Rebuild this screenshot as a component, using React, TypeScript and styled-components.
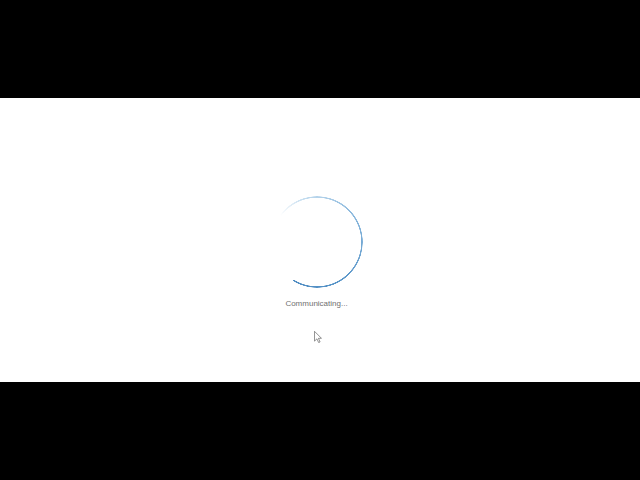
import styled, { createGlobalStyle } from "styled-components";

const GlobalStyle = createGlobalStyle`
  html, body {
    margin: 0;
    padding: 0;
    background: #000000;
  }
`;

export default function App() {
  return (
    <>
      <GlobalStyle />
      <Screen>
        <Band>
          <Spinner />
          <Status>Communicating...</Status>
          <Pointer width="8" height="12" viewBox="0 0 12 19">
            <path
              d="M0.5 0.5 L0.5 16 L4.3 12.4 L7 18.3 L9.3 17.3 L6.7 11.6 L11.5 11.6 Z"
              fill="#ffffff"
              stroke="#555555"
              strokeWidth="1"
              strokeLinejoin="round"
            />
          </Pointer>
        </Band>
      </Screen>
    </>
  );
}

const Screen = styled.div`
  width: 640px;
  height: 480px;
  background: #000000;
  display: flex;
  flex-direction: column;
  justify-content: center;
`;

const Band = styled.div`
  position: relative;
  height: 284px;
  background: #ffffff;
  display: flex;
  flex-direction: column;
  align-items: center;
  padding: 98px 7px 0 0;
  box-sizing: border-box;
  font-family: "Liberation Sans", Arial, sans-serif;
`;

// thin ring cut out of the conic gradient
const ring = `radial-gradient(
    circle closest-side,
    transparent calc(100% - 2px),
    #000 calc(100% - 1.5px),
    #000 calc(100% - 0.4px),
    transparent 100%
  )`;

const Spinner = styled.div`
  flex: none;
  width: 92px;
  height: 92px;
  margin-left: 1px;
  border-radius: 50%;
  background: conic-gradient(
    from 306deg,
    rgba(90, 150, 200, 0) 0deg,
    rgba(140, 188, 224, 0.55) 40deg,
    rgba(116, 170, 214, 0.85) 110deg,
    #5895c8 200deg,
    #4f8cc2 266deg,
    transparent 266deg
  );
  -webkit-mask: ${ring};
  mask: ${ring};
`;

const Status = styled.div`
  margin-top: 10px;
  font-size: 8px;
  line-height: 12px;
  color: #707070;
`;

const Pointer = styled.svg`
  position: absolute;
  left: 314px;
  top: 233px;
`;
